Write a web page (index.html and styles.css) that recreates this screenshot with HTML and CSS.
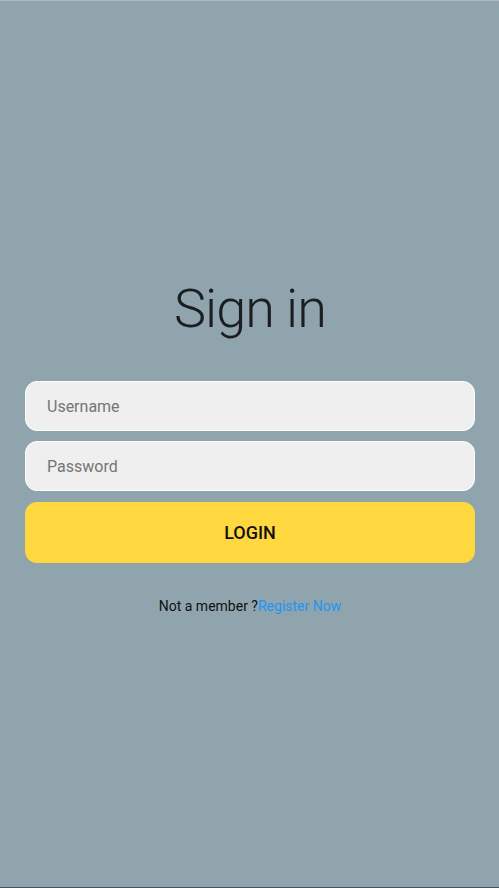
FILE: index.html
```html
<!DOCTYPE html>
<html lang="en">
<head>
<meta charset="utf-8">
<title>Sign in</title>
<link rel="stylesheet" href="styles.css">
</head>
<body>
<main class="page">
  <h1 class="title">Sign in</h1>
  <form class="form">
    <input class="field" type="text" placeholder="Username">
    <input class="field field-second" type="password" placeholder="Password">
    <button class="login" type="button">LOGIN</button>
  </form>
  <p class="register">Not a member ?<a class="register-link" href="#">Register Now</a></p>
</main>
</body>
</html>
```
FILE: styles.css
```css
html, body {
  margin: 0;
  padding: 0;
}
body {
  width: 499px;
  height: 888px;
  box-sizing: border-box;
  background: #8fa4ad;
  border-top: 1px solid #b3b6b8;
  border-bottom: 1px solid #4a5458;
  font-family: Roboto, "Liberation Sans", sans-serif;
  overflow: hidden;
}
.page {
  display: flex;
  flex-direction: column;
  padding: 281px 24px 0 25px;
}
.title {
  margin: 0;
  font-family: Roboto, sans-serif;
  font-weight: 300;
  font-size: 54px;
  line-height: 54px;
  letter-spacing: -1px;
  text-align: center;
  color: #1b1e20;
}
.form {
  display: flex;
  flex-direction: column;
  margin-top: 45px;
}
.field {
  box-sizing: border-box;
  height: 50px;
  width: 100%;
  padding: 0 21px;
  border: 1px solid #ffffff;
  border-radius: 12px;
  background: #efefef;
  font-family: Roboto, sans-serif;
  font-size: 16px;
  color: #333;
  outline: none;
}
.field::placeholder {
  color: #757575;
}
.field-second {
  margin-top: 10px;
}
.login {
  margin-top: 11px;
  height: 61px;
  width: 100%;
  border: none;
  border-radius: 12px;
  background: #ffd83f;
  font-family: Roboto, sans-serif;
  font-weight: 500;
  font-size: 18px;
  color: #111;
  cursor: pointer;
}
.register {
  margin: 33px 0 0;
  text-align: center;
  font-size: 14px;
  line-height: 20px;
  color: #111;
}
.register-link {
  color: #2196f3;
  text-decoration: none;
}
```
